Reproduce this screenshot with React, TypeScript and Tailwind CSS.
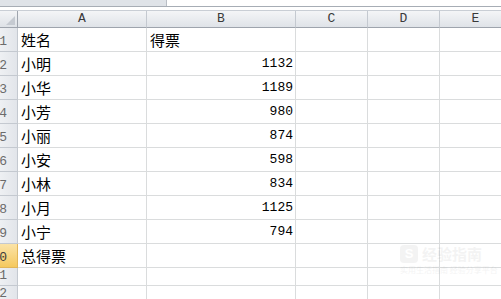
const cols = ['A', 'B', 'C', 'D', 'E'];
const colWidths = ['w-[129px]', 'w-[149px]', 'w-[72px]', 'w-[72px]', 'w-[72px]'];

const rows: { name: string; votes: string }[] = [
  { name: '姓名', votes: '得票' },
  { name: '小明', votes: '1132' },
  { name: '小华', votes: '1189' },
  { name: '小芳', votes: '980' },
  { name: '小丽', votes: '874' },
  { name: '小安', votes: '598' },
  { name: '小林', votes: '834' },
  { name: '小月', votes: '1125' },
  { name: '小宁', votes: '794' },
  { name: '总得票', votes: '' },
  { name: '', votes: '' },
  { name: '', votes: '' },
];

const cjk = "font-['Noto_Sans_CJK_SC',sans-serif]";
const mono = "font-['Liberation_Mono',monospace]";

const RowHeader = ({ n, active }: { n: number; active: boolean }) => (
  <div
    className={`w-[18px] shrink-0 overflow-hidden flex items-end justify-end pr-[10px] pb-[1px] border-r border-b ${mono} text-[13px] leading-[16px] ${
      active
        ? 'bg-gradient-to-b from-[#fbe3a6] to-[#f5c95e] border-[#e1b65a] text-[#3d3d3d]'
        : 'bg-gradient-to-r from-[#eef0f3] to-[#e2e5ea] border-[#c4c9d0] text-[#6b6b6b]'
    }`}
  >
    <span className="whitespace-nowrap">{n}</span>
  </div>
);

const App = () => {
  return (
    <div className="w-[501px] h-[299px] overflow-hidden bg-white relative">
      {/* formula bar edge */}
      <div className="flex h-[6px]">
        <div className="w-[166px] bg-[#dfe3e8]" />
        <div className="flex-1 bg-white border-l border-[#b9bec5]" />
      </div>
      <div className="h-px bg-[#a7adb5]" />
      <div className="h-[3px] bg-white" />

      {/* column headers */}
      <div className="flex h-[18px] border-t border-[#c9ced5]">
        <div className="w-[18px] shrink-0 bg-gradient-to-b from-[#f3f4f6] to-[#dee2e7] border-r border-b border-[#9ea4ad] relative">
          <div className="absolute right-[2px] bottom-[2px] w-0 h-0 border-l-[9px] border-l-transparent border-b-[9px] border-b-[#c5cad1]" />
        </div>
        {cols.map((c, i) => (
          <div
            key={c}
            className={`${colWidths[i]} shrink-0 flex items-center justify-center bg-gradient-to-b from-[#f4f5f7] to-[#dfe3e8] border-r border-b border-r-[#c4c9d0] border-b-[#9ea4ad] ${mono} text-[13px] text-[#3a3a3a]`}
          >
            {c}
          </div>
        ))}
      </div>

      {/* rows */}
      {rows.map((r, i) => {
        const h = i < 10 ? 'h-[24px]' : 'h-[18px]';
        const isNum = /^\d+$/.test(r.votes);
        return (
          <div key={i} className={`flex ${h}`}>
            <RowHeader n={i + 1} active={i === 9} />
            <div className={`${colWidths[0]} shrink-0 border-r border-b border-[#dadcdd] flex items-end pl-[3px] pb-[2px] ${cjk} text-[15px] leading-[19px] text-black`}>
              {r.name}
            </div>
            <div
              className={`${colWidths[1]} shrink-0 border-r border-b border-[#dadcdd] flex items-end pb-[2px] text-black ${
                isNum ? `justify-end pr-[2px] ${mono} text-[13px] leading-[18px]` : `pl-[3px] ${cjk} text-[15px] leading-[19px]`
              }`}
            >
              {r.votes}
            </div>
            <div className={`${colWidths[2]} shrink-0 border-r border-b border-[#dadcdd]`} />
            <div className={`${colWidths[3]} shrink-0 border-r border-b border-[#dadcdd]`} />
            <div className={`${colWidths[4]} shrink-0 border-r border-b border-[#dadcdd]`} />
          </div>
        );
      })}

      {/* faint watermark */}
      <div className="absolute left-[400px] top-[245px] flex flex-col gap-[2px] opacity-[0.06]">
        <div className="flex items-center gap-[4px]">
          <div className="w-[18px] h-[18px] rounded-[4px] bg-[#444] text-white text-[13px] font-bold flex items-center justify-center font-['Liberation_Sans',sans-serif]">
            S
          </div>
          <span className={`${cjk} text-[15px] font-bold text-[#444] leading-[18px]`}>经验指南</span>
        </div>
        <span className={`${cjk} text-[8px] text-[#444] leading-[10px] whitespace-nowrap`}>实用生活指南 经验分享平台</span>
      </div>
    </div>
  );
};

export default App;
